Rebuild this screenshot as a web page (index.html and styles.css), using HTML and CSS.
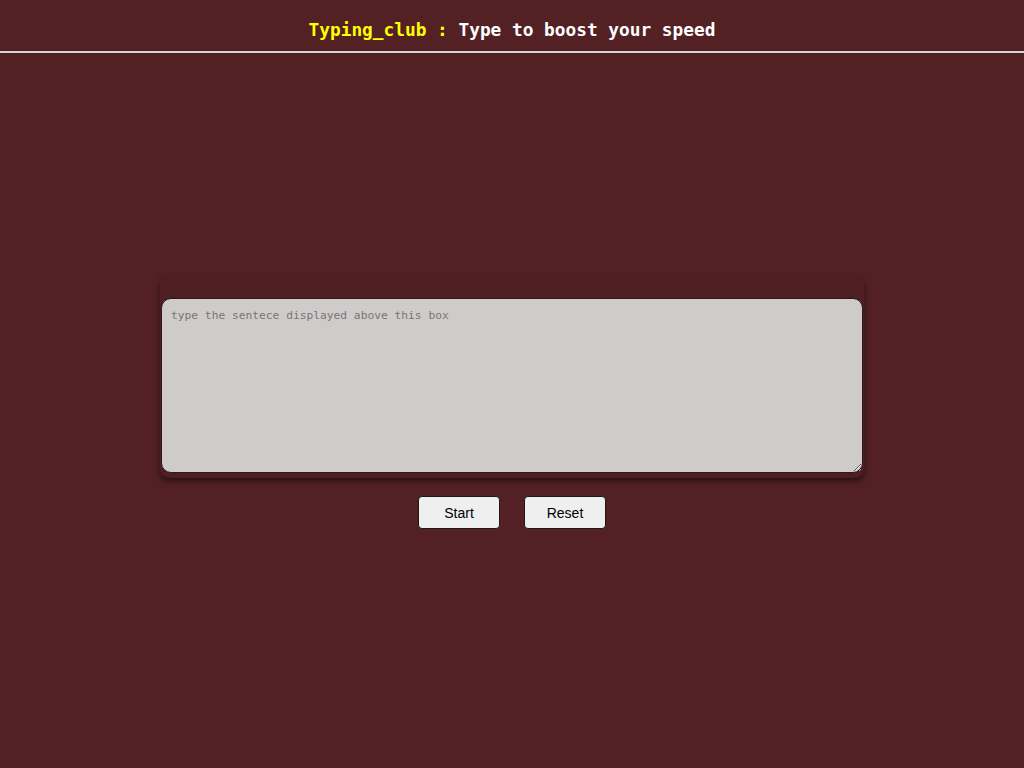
FILE: index.html
```html
<!DOCTYPE html>
<html>
<head>
<meta charset="utf-8">
<link rel="stylesheet" href="styles.css">
</head>
<body>
<header class="top">
  <h1 class="title"><span class="brand">Typing_club :</span> Type to boost your speed</h1>
</header>
<main class="main">
  <div class="panel">
    <div class="sentence"></div>
    <textarea class="input" placeholder="type the sentece displayed above this box"></textarea>
  </div>
  <div class="actions">
    <button class="btn">Start</button>
    <button class="btn">Reset</button>
  </div>
</main>
</body>
</html>
```
FILE: styles.css
```css
html, body {
  margin: 0;
  padding: 0;
  background: #532124;
  height: 100%;
}
.top {
  height: 51px;
  border-bottom: 2px solid #d6d6d6;
  display: flex;
  align-items: center;
  justify-content: center;
}
.title {
  margin: 0;
  font-family: "DejaVu Sans Mono", "Liberation Mono", monospace;
  font-weight: bold;
  font-size: 17.8px;
  color: #ffffff;
  padding-top: 7px;
}
.brand {
  color: #ffff00;
}
.main {
  display: flex;
  flex-direction: column;
  align-items: center;
  padding-top: 222px;
}
.panel {
  width: 704px;
  box-sizing: border-box;
  background: #4e1e21;
  border-radius: 9px;
  padding: 0 1px 5px 1px;
  box-shadow: 0 3px 6px rgba(0, 0, 0, 0.55);
  display: flex;
  flex-direction: column;
}
.sentence {
  height: 23px;
}
.input {
  height: 175px;
  box-sizing: border-box;
  background: #d0cbcb;
  border: 1px solid #2a1a1a;
  border-radius: 10px;
  padding: 10px 9px;
  font-family: "DejaVu Sans Mono", "Liberation Mono", monospace;
  font-size: 11.25px;
  color: #222;
  resize: vertical;
  outline: none;
}
.input::placeholder {
  color: #7a7474;
}
.actions {
  display: flex;
  gap: 24px;
  margin-top: 18px;
}
.btn {
  width: 82px;
  height: 33px;
  background: #efefef;
  border: 1px solid #1a1a1a;
  border-radius: 4px;
  font-family: "Liberation Sans", Arial, sans-serif;
  font-size: 14px;
  color: #000;
  padding: 0;
}
```
